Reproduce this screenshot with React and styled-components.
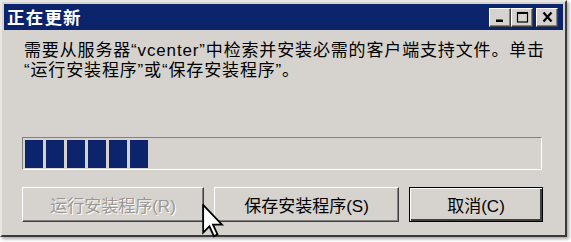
import React from "react";
import styled, { createGlobalStyle } from "styled-components";

const Global = createGlobalStyle`
  html, body { margin: 0; padding: 0; background: #ffffff; }
  body { font-family: "Liberation Sans", "Noto Sans CJK SC", sans-serif; }
`;

const Page = styled.div`
  width: 571px;
  height: 242px;
  position: relative;
  overflow: hidden;
`;

const Window = styled.div`
  box-sizing: border-box;
  width: 567px;
  height: 237px;
  background: #d6d3ce;
  border: 2px solid;
  border-color: #e8e6e2 #3a3a3a #3a3a3a #e8e6e2;
  padding: 2px;
  box-shadow: 2px 2px 3px rgba(0, 0, 0, 0.35);
  display: flex;
  flex-direction: column;
`;

const TitleBar = styled.div`
  height: 26px;
  background: #0c246b;
  display: flex;
  align-items: center;
  padding: 0 5px 0 3px;
`;

const Title = styled.div`
  flex: 1;
  color: #fff;
  font-family: "Noto Sans CJK SC", sans-serif;
  font-weight: 700;
  font-size: 17.5px;
  line-height: 26px;
  letter-spacing: 1.2px;
`;

const TitleButton = styled.div`
  box-sizing: border-box;
  width: 22px;
  height: 19px;
  margin-left: ${(p) => p.$gap || 0}px;
  background: #d6d3ce;
  border: 1px solid;
  border-color: #fff #404040 #404040 #fff;
  box-shadow: inset -1px -1px 0 #808080;
  display: flex;
  align-items: center;
  justify-content: center;
`;

const Content = styled.div`
  flex: 1;
  display: flex;
  flex-direction: column;
  padding: 11px 18px 0 18px;
`;

const Message = styled.div`
  margin-left: 2px;
  font-size: 17px;
  letter-spacing: 0.85px;
  line-height: 20px;
  color: #000;
  white-space: nowrap;
`;

const Progress = styled.div`
  box-sizing: border-box;
  margin-top: 56px;
  width: 520px;
  height: 33px;
  border: 1px solid;
  border-color: #808080 #fff #fff #808080;
  display: flex;
  align-items: center;
  gap: 3px;
  padding: 0 2px;
`;

const Block = styled.div`
  width: 18px;
  height: 28px;
  background: #0c246b;
`;

const ButtonRow = styled.div`
  margin-top: 17px;
  display: flex;
  gap: 10px;
`;

const Button = styled.div`
  box-sizing: border-box;
  width: ${(p) => p.$w}px;
  height: 35px;
  background: #d6d3ce;
  border: 1px solid;
  border-color: ${(p) => (p.$default ? "#000" : "#fff #404040 #404040 #fff")};
  box-shadow: ${(p) =>
    p.$default
      ? "inset 1px 1px 0 #fff, inset -2px -2px 0 #404040, inset -1px -1px 0 #404040"
      : "inset -1px -1px 0 #808080"};
  display: flex;
  align-items: center;
  justify-content: center;
  font-size: 17px;
  color: ${(p) => (p.$disabled ? "#9a9893" : "#000")};
  text-shadow: ${(p) => (p.$disabled ? "1px 1px 0 #fff" : "none")};
`;

const Cursor = styled.svg`
  position: absolute;
  left: 202px;
  top: 204px;
`;

export default function App() {
  return (
    <Page>
      <Global />
      <Window>
        <TitleBar>
          <Title>正在更新</Title>
          <TitleButton>
            <svg width="12" height="12" viewBox="0 0 12 12">
              <rect x="2" y="8.5" width="7" height="2.5" fill="#000" />
            </svg>
          </TitleButton>
          <TitleButton>
            <svg width="13" height="12" viewBox="0 0 13 12">
              <rect x="1.5" y="1.5" width="10" height="9.5" fill="none" stroke="#000" strokeWidth="1.2" />
              <rect x="1" y="1" width="11" height="2" fill="#000" />
            </svg>
          </TitleButton>
          <TitleButton $gap={3}>
            <svg width="13" height="12" viewBox="0 0 13 12">
              <path d="M2.5 1.5 L10.5 10.5 M10.5 1.5 L2.5 10.5" stroke="#000" strokeWidth="2.2" />
            </svg>
          </TitleButton>
        </TitleBar>
        <Content>
          <Message>
            需要从服务器“vcenter”中检索并安装必需的客户端支持文件。单击
            <br />
            “运行安装程序”或“保存安装程序”。
          </Message>
          <Progress>
            {Array.from({ length: 6 }).map((_, i) => (
              <Block key={i} />
            ))}
          </Progress>
          <ButtonRow>
            <Button $w={182} $disabled>
              运行安装程序(R)
            </Button>
            <Button $w={185}>保存安装程序(S)</Button>
            <Button $w={134} $default>
              取消(C)
            </Button>
          </ButtonRow>
        </Content>
      </Window>
      <Cursor width="22" height="34" viewBox="0 0 12 19">
        <path
          d="M0.5 0.5 L0.5 16 L4 12.5 L6.5 18 L8.5 17 L6 11.5 L11 11.5 Z"
          fill="#fff"
          stroke="#000"
          strokeWidth="1"
          strokeLinejoin="miter"
        />
      </Cursor>
    </Page>
  );
}
